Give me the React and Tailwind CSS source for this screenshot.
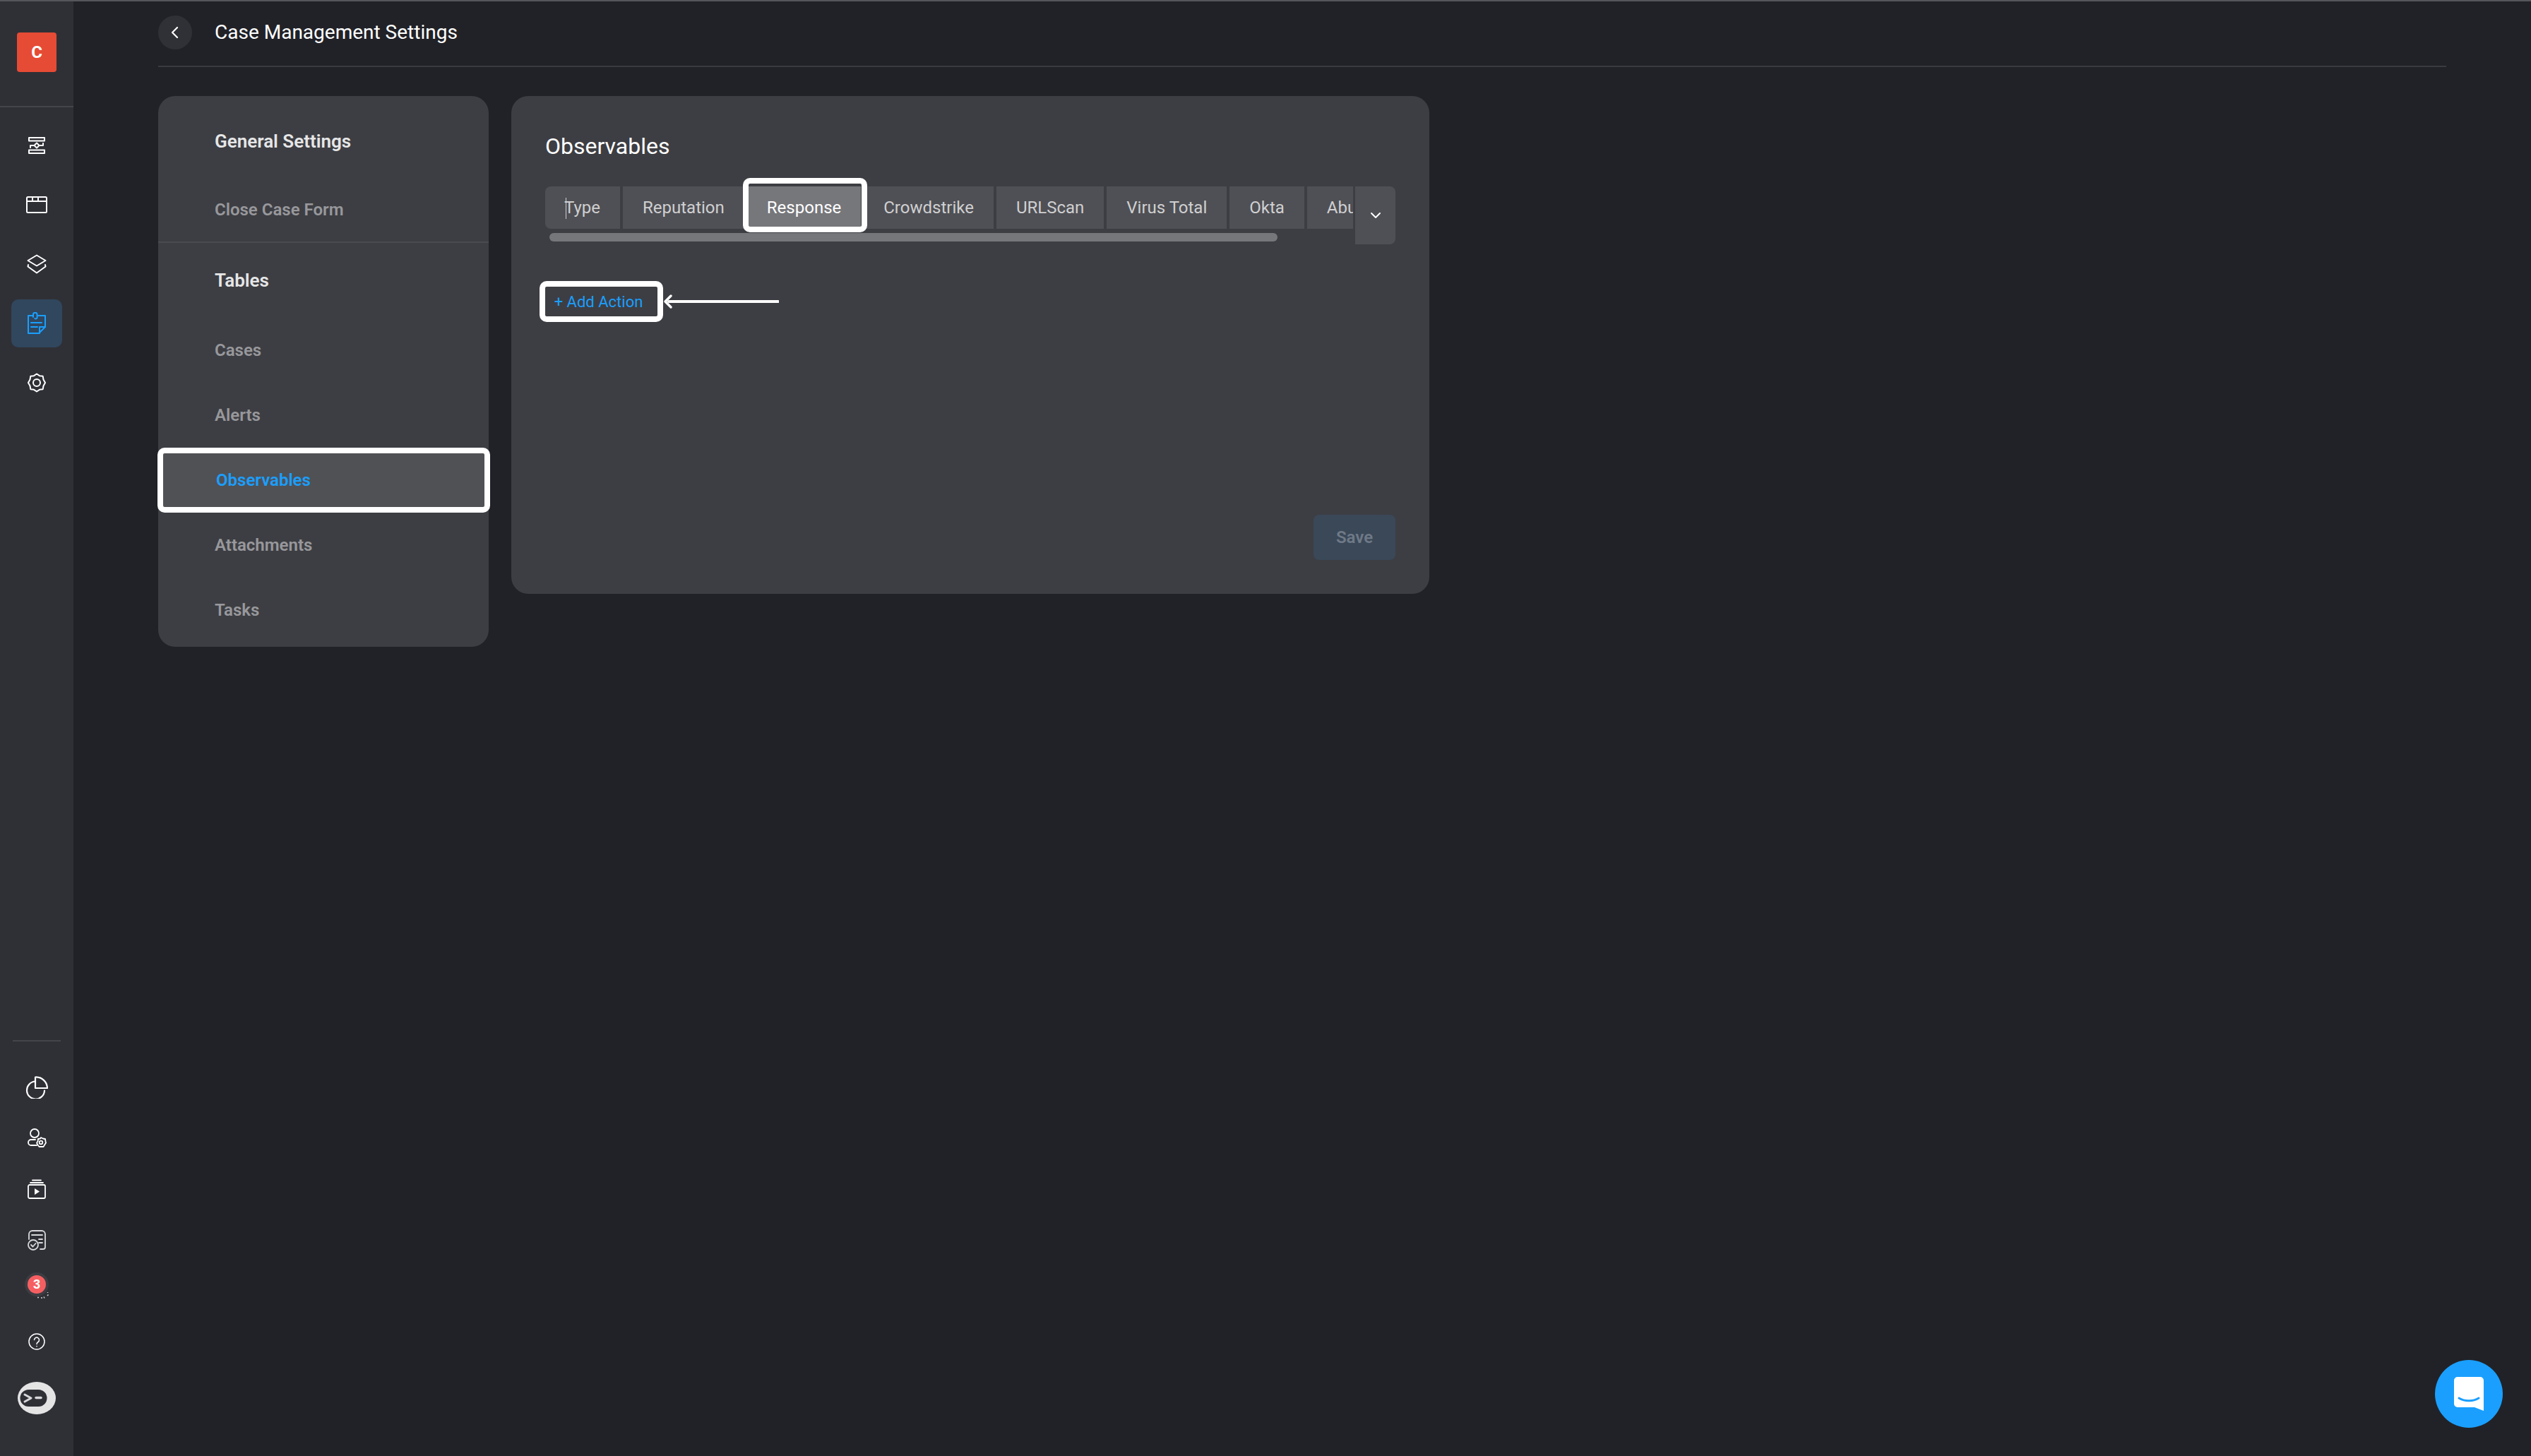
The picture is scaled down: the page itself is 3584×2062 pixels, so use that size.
import React from 'react'

const menuTop = [
  { label: 'General Settings', head: true, box: 'h-[116px] pt-[12px]' },
  { label: 'Close Case Form', box: 'h-[92px] border-b-2 border-[#4a4b50]' },
  { label: 'Tables', head: true, box: 'h-[106px]' },
  { label: 'Cases', box: 'h-[92px]' },
  { label: 'Alerts', box: 'h-[92px]' },
  { label: 'Observables', active: true, box: 'h-[92px]' },
  { label: 'Attachments', box: 'h-[92px]' },
  { label: 'Tasks', box: 'h-[92px]' },
]

const tabs = ['Type', 'Reputation', 'Response', 'Crowdstrike', 'URLScan', 'Virus Total', 'Okta', 'AbuseIPDB']

const Ico = ({ w, h, color = '#fff', sw = 2, children }) => (
  <svg width={w} height={h} viewBox={`0 0 ${w} ${h}`} fill="none" stroke={color} strokeWidth={sw} strokeLinecap="round" strokeLinejoin="round">
    {children}
  </svg>
)

const FlowIcon = () => (
  <Ico w={24} h={24}>
    <rect x="1" y="1" width="22" height="4.5" />
    <rect x="1" y="18.5" width="22" height="4.5" />
    <path d="M3 15v-3h5.5M15.5 12H21V9" />
    <path d="M12 8.5l3.5 3.5-3.5 3.5L8.5 12z" />
  </Ico>
)

const WindowIcon = () => (
  <Ico w={30} h={24}>
    <rect x="1" y="1" width="28" height="22" rx="1.5" />
    <path d="M1 7h28M9 1v6M17 1v6" />
  </Ico>
)

const LayersIcon = () => (
  <Ico w={28} h={28}>
    <path d="M14 1.5L26.500 9 14 16.500 1.500 9z" />
    <path d="M2 15l-.5 2.500L14 26.500l12.500-9-.5-2.500" />
  </Ico>
)

const NoteIcon = () => (
  <Ico w={28} h={32} color="#1a9fff">
    <path d="M8 5H2v25h15l9-9V5H16" />
    <path d="M9 7V3.500a2.800 2.800 0 0 1 5.600 0V8a2 2 0 0 1-3.200 1" />
    <path d="M6 15h15M6 21h9" />
    <path d="M26 21h-8v9" />
  </Ico>
)

const GearIcon = () => (
  <Ico w={26} h={28}>
    <path d="M13 1.500l4 2.700 4.700.6.800 4.700L25 14l-2.500 4.500-.8 4.700-4.700.6-4 2.700-4-2.700-4.700-.6-.8-4.700L1 14l2.500-4.500.8-4.700 4.700-.6z" />
    <circle cx="13" cy="14" r="5" />
  </Ico>
)

const PieIcon = () => (
  <Ico w={32} h={32} sw={2.200}>
    <path d="M14 7.500a12.500 12.500 0 1 0 13 13" />
    <path d="M14 1.500v15.500h17A16 16 0 0 0 14 1.500z" />
  </Ico>
)

const PersonGearIcon = () => (
  <Ico w={28} h={28} sw={1.800}>
    <circle cx="11" cy="7" r="6" />
    <path d="M12 16H6a4 4 0 0 0 0 8h8" />
    <path d="M20 13l3 1.500 3 .5.500 3.500.5 2-2 3-1.500 2.500h-6l-2-2.500-1.500-3 1.500-2 .5-3.500 3-.5z" />
    <circle cx="20" cy="20" r="2.300" />
  </Ico>
)

const PlayIcon = () => (
  <Ico w={26} h={28} sw={1.800}>
    <rect x="1" y="8" width="24" height="19" rx="2" />
    <path d="M4 5h18M7 1.500h12" />
    <path d="M10 13l7 4.500-7 4.500z" fill="#fff" stroke="none" />
  </Ico>
)

const DocCheckIcon = () => (
  <Ico w={26} h={30} color="#d8d8da" sw={1.800}>
    <path d="M2 13V6a5 5 0 0 1 5-5h13a5 5 0 0 1 5 5v18c0 2-1 3-3 3h-4" />
    <path d="M6 7h15M16 13h5M16 18h5" />
    <circle cx="8" cy="21" r="7" fill="#2f3036" />
    <path d="M5 21l2.500 2.500L11.500 19" />
  </Ico>
)

const HelpIcon = () => (
  <Ico w={24} h={24} sw={1.500}>
    <circle cx="12" cy="12" r="11" />
    <path d="M8.500 9.500a3.500 3.500 0 1 1 5.500 3c-1.300.8-2 1.500-2 3" />
    <path d="M12 18.500v.2" />
  </Ico>
)

const RobotIcon = () => (
  <svg width="54" height="46" viewBox="0 0 54 46">
    <ellipse cx="27" cy="23" rx="27" ry="23" fill="#e4e4e5" />
    <rect x="3.500" y="11" width="38" height="24" rx="12" fill="#2f3036" />
    <path d="M10 18l9 5-9 5" fill="none" stroke="#d8d8da" strokeWidth="3" strokeLinecap="round" strokeLinejoin="round" />
    <path d="M26 22.500h7" stroke="#d8d8da" strokeWidth="3.500" strokeLinecap="round" />
  </svg>
)

const Rail = ({ children, active, box = 'h-[84px]' }) => (
  <div className={`${box} flex items-center justify-center`}>
    {active ? (
      <div className="w-[72px] h-[68px] rounded-[10px] bg-[#30475e] flex items-center justify-center">{children}</div>
    ) : children}
  </div>
)

const App = () => {
  return (
    <div className="h-[2062px] w-[3584px] flex overflow-hidden relative bg-[#212227] border-t-2 border-[#55565b] font-['Roboto',sans-serif]">
      <aside className="w-[104px] flex-none bg-[#2f3036] flex flex-col">
        <div className="h-[150px] border-b-2 border-[#44454a] pt-[44px] flex justify-center">
          <div className="w-[56px] h-[56px] rounded-[4px] bg-[#e64b35] text-white text-[24px] font-bold flex items-center justify-center">C</div>
        </div>
        <div className="pt-[12px]">
          <Rail><FlowIcon /></Rail>
          <Rail><WindowIcon /></Rail>
          <Rail><LayersIcon /></Rail>
          <Rail active><NoteIcon /></Rail>
          <Rail><GearIcon /></Rail>
        </div>
        <div className="mt-auto pb-[57px]">
          <div className="mx-[18px] h-[2px] bg-[#44454a] mb-[29px]"></div>
          <Rail box="h-[72px]"><PieIcon /></Rail>
          <Rail box="h-[72px]"><PersonGearIcon /></Rail>
          <Rail box="h-[72px]"><PlayIcon /></Rail>
          <Rail box="h-[73px]"><DocCheckIcon /></Rail>
          <Rail box="h-[52px]">
            <div className="relative w-[34px] h-[34px] rounded-full bg-[#3c3d42] flex items-center justify-center">
              <div className="w-[26px] h-[26px] rounded-full bg-[#f65f62] text-white text-[18px] font-bold flex items-center justify-center font-['Liberation_Sans',sans-serif]">3</div>
              <svg className="absolute left-[17px] top-[26px]" width="18" height="12" viewBox="0 0 18 12" fill="none" stroke="#cfcfd1" strokeWidth="1.500">
                <path d="M1 9.500h2M6 10h2M10 8.500l1 2M15 7l1.500-1.500M15.500 2v1" />
              </svg>
            </div>
          </Rail>
          <Rail box="h-[110px]"><HelpIcon /></Rail>
          <Rail box="h-[50px]"><RobotIcon /></Rail>
        </div>
      </aside>

      <main className="flex-1 px-[120px]">
        <header className="h-[93px] pb-[3px] border-b-2 border-[#3a3b40] flex items-center gap-[32px]">
          <div className="w-[48px] h-[48px] rounded-full bg-[#303136] flex items-center justify-center">
            <svg width="14" height="20" viewBox="0 0 14 20" fill="none" stroke="#fff" strokeWidth="2.200" strokeLinecap="round" strokeLinejoin="round">
              <path d="M10 3L3 10l7 7" />
            </svg>
          </div>
          <h1 className="text-[28px] text-white leading-none">Case Management Settings</h1>
        </header>

        <div className="flex gap-[32px] mt-[41px] items-start">
          <nav className="w-[468px] flex-none h-[780px] rounded-[24px] bg-[#3d3e43] pb-[9px]">
            {menuTop.map((item) => (
              <div key={item.label} className={`${item.box} flex items-center relative`}>
                {item.active && (
                  <div className="absolute -left-[1px] -right-[2px] inset-y-0 bg-[#505155] border-[8px] border-white rounded-[10px]"></div>
                )}
                <span className={`relative ml-[80px] font-semibold ${item.head ? 'text-[26px] text-[#e6e6e7]' : item.active ? 'text-[24px] text-[#1a9fff] ml-[82px]' : 'text-[24px] text-[#98989c]'}`}>
                  {item.label}
                </span>
              </div>
            ))}
          </nav>

          <section className="w-[1300px] h-[705px] rounded-[24px] bg-[#3d3e43] pl-[48px] pr-[48px] flex flex-col">
            <h2 className="text-[32px] text-white leading-none mt-[55px]">Observables</h2>
            <div className="flex gap-[3px] mt-[41px] -mb-[4px]">
              <div className="w-[1144px] flex-none overflow-hidden -mt-[16px] pt-[16px]">
                <div className="flex gap-[4px]">
                  {tabs.map((t, i) => (
                    <div
                      key={t}
                      className={`relative flex-none h-[60px] pr-[28px] flex items-center text-[24px] ${i === 0 ? 'rounded-l-[8px] pl-[27px]' : 'pl-[28px]'} ${t === 'Response' ? 'bg-[#76777b] text-white' : 'bg-[#4f5055] text-[#cfcfd1]'}`}
                    >
                      {i === 0 && <span className="absolute left-[29px] top-[16px] w-[1px] h-[30px] bg-[#cfcfd1]"></span>}
                      {t}
                      {t === 'Response' && (
                        <div className="absolute z-10 -left-[6px] -right-[9px] -top-[12px] -bottom-[5px] border-[8px] border-white rounded-[10px]"></div>
                      )}
                    </div>
                  ))}
                </div>
                <div className="mt-[6px] ml-[6px] w-[1031px] h-[12px] rounded-full bg-[#76777b]"></div>
              </div>
              <div className="w-[57px] h-[82px] flex-none bg-[#4f5055] rounded-r-[8px] flex items-center justify-center">
                <svg width="18" height="12" viewBox="0 0 18 12" fill="none" stroke="#fff" strokeWidth="2" strokeLinecap="round" strokeLinejoin="round">
                  <path d="M3 3l6 6 6-6" />
                </svg>
              </div>
            </div>
            <div className="flex items-center mt-[56px] -ml-[8px]">
              <div className="w-[175px] h-[58px] pr-[8px] border-[8px] border-white rounded-[10px] flex items-center justify-center text-[22px] text-[#1a9fff] whitespace-nowrap">
                + Add Action
              </div>
              <svg width="164" height="24" viewBox="0 0 164 24" fill="none" stroke="#fff" strokeLinejoin="round" strokeLinecap="round">
                <path d="M8 12h155" strokeWidth="4" />
                <path d="M11 4L3 12l8 8" strokeWidth="3.500" />
              </svg>
            </div>
            <div className="mt-auto mb-[48px] flex justify-end">
              <div className="w-[116px] h-[64px] rounded-[8px] bg-[#3a4858] text-[#6f7987] text-[24px] font-semibold flex items-center justify-center">Save</div>
            </div>
          </section>
        </div>
      </main>

      <div className="absolute right-[40px] bottom-[40px] w-[96px] h-[96px] rounded-full bg-[#1a9fff] flex items-center justify-center">
        <svg width="42" height="48" viewBox="0 0 42 48">
          <path d="M5 0h32a5 5 0 0 1 5 5v43l-13-5H5a5 5 0 0 1-5-5V5a5 5 0 0 1 5-5z" fill="#fff" />
          <path d="M7 30c8 5 20 5 28 0" fill="none" stroke="#1a9fff" strokeWidth="3" strokeLinecap="round" />
        </svg>
      </div>
    </div>
  )
}

export default App
